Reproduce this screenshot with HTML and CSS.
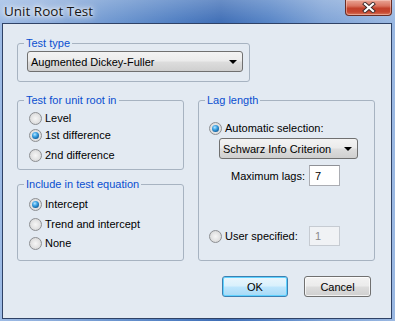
FILE: index.html
```html
<!DOCTYPE html>
<html>
<head>
<meta charset="utf-8">
<title>Unit Root Test</title>
<link rel="stylesheet" href="styles.css">
</head>
<body>
<div class="window">
  <div class="titlebar">
    <span class="title">Unit Root Test</span>
    <span class="close">
      <svg width="14" height="11" viewBox="0 0 14 11">
        <path d="M3 2 L11 9 M11 2 L3 9" stroke="#3b2a2a" stroke-width="4" stroke-linecap="square" fill="none"/>
        <path d="M3 2 L11 9 M11 2 L3 9" stroke="#ffffff" stroke-width="2.2" stroke-linecap="square" fill="none"/>
      </svg>
    </span>
  </div>
  <div class="client">
    <fieldset class="group type-group">
      <legend>Test type</legend>
      <div class="body type-body">
        <div class="combo type-combo"><span>Augmented Dickey-Fuller</span><i class="arrow"></i></div>
      </div>
    </fieldset>
    <div class="columns">
      <div class="col">
        <fieldset class="group unit-group">
          <legend>Test for unit root in</legend>
          <div class="body unit-body">
            <label class="radio"><span class="dot"></span>Level</label>
            <label class="radio gap1"><span class="dot on"></span>1st difference</label>
            <label class="radio gap4"><span class="dot"></span>2nd difference</label>
          </div>
        </fieldset>
        <fieldset class="group include-group">
          <legend>Include in test equation</legend>
          <div class="body include-body">
            <label class="radio"><span class="dot on"></span>Intercept</label>
            <label class="radio gap4"><span class="dot"></span>Trend and intercept</label>
            <label class="radio gap3"><span class="dot"></span>None</label>
          </div>
        </fieldset>
      </div>
      <fieldset class="group lag-group">
        <legend>Lag length</legend>
        <div class="body lag-body">
          <label class="radio"><span class="dot on"></span>Automatic selection:</label>
          <div class="combo lag-combo"><span>Schwarz Info Criterion</span><i class="arrow"></i></div>
          <div class="maxrow"><span class="maxlabel">Maximum lags:</span><span class="field">7</span></div>
          <div class="userrow">
            <label class="radio userlabel"><span class="dot"></span>User specified:</label>
            <span class="field disabled">1</span>
          </div>
        </div>
      </fieldset>
    </div>
    <div class="buttons">
      <button class="btn default">OK</button>
      <button class="btn">Cancel</button>
    </div>
  </div>
</div>
</body>
</html>
```
FILE: styles.css
```css
* { box-sizing: border-box; }
html, body { margin: 0; padding: 0; }
body {
  font-family: "Liberation Sans", Arial, sans-serif;
  font-size: 11px;
  color: #000;
  background: #ffffff;
}
.window {
  width: 395px;
  height: 321px;
  overflow: hidden;
  background:
    linear-gradient(180deg, rgba(255,255,255,0.22) 0px, rgba(255,255,255,0) 23px),
    linear-gradient(90deg, #9dbbe5 0%, #8eaedc 12%, #6e97d0 28%, #4f7ec2 45%, #3f6eb6 56%, #5684c6 68%, #7fa3d6 82%, #9ab8e2 100%);
}
.titlebar {
  height: 23px;
  display: flex;
  justify-content: space-between;
  align-items: flex-start;
  padding: 0 2px 0 4px;
}
.title {
  font-family: "Open Sans", "Noto Sans", sans-serif;
  font-size: 13.5px;
  line-height: 18px;
  padding-top: 2px;
  color: #161616;
  text-shadow: 0 0 6px #fff, 0 0 10px #fff, 0 0 3px rgba(255,255,255,0.9);
}
.close {
  width: 47px;
  height: 16px;
  margin-right: 1px;
  border: 1px solid #6a2d24;
  border-top: none;
  border-radius: 0 0 4px 4px;
  background: linear-gradient(180deg, #e9a696 0%, #d9735f 40%, #c2412b 55%, #c6462f 80%, #d87a5f 100%);
  box-shadow: inset 0 0 0 1px rgba(255,220,210,0.45);
  display: flex;
  align-items: center;
  justify-content: center;
}
.client {
  margin-left: 2px;
  width: 390px;
  height: 296px;
  border: 1px solid #2f4266;
  background: #e3eaf2;
  padding: 12px 16px 0 14px;
}
.group {
  margin: 0;
  padding: 0;
  border: 1px solid #a7b3c1;
  border-radius: 3px;
  min-width: 0;
}
.group legend {
  padding: 0 2px;
  margin-left: 6px;
  color: #0a4fd0;
  line-height: 14px;
  font-size: 11px;
}
.type-group { width: 233px; }
.type-body { padding: 1px 6px 9px 9px; }
.combo {
  display: flex;
  align-items: center;
  justify-content: space-between;
  height: 21px;
  border: 1px solid #707070;
  border-radius: 3px;
  background: linear-gradient(180deg, #f3f3f3 0%, #ebebeb 48%, #dddddd 52%, #cfcfcf 100%);
  padding: 0 5px 0 3px;
}
.type-combo { width: 216px; }
.arrow {
  width: 0;
  height: 0;
  border-left: 4px solid transparent;
  border-right: 4px solid transparent;
  border-top: 4px solid #000;
}
.columns {
  margin-top: 11px;
  display: grid;
  grid-template-columns: 167px 177px;
  column-gap: 14px;
}
.col { display: flex; flex-direction: column; }
.include-group { margin-top: 7px; }
.radio {
  display: flex;
  align-items: center;
  height: 16px;
  gap: 3px;
  white-space: nowrap;
}
.gap1 { margin-top: 1px; }
.gap3 { margin-top: 3px; }
.gap4 { margin-top: 4px; }
.dot {
  position: relative;
  width: 13px;
  height: 13px;
  border-radius: 50%;
  border: 1px solid #8d8f92;
  background: radial-gradient(circle at 50% 50%, #f6f6f6 0%, #e6e6e6 45%, #cfd0d1 100%);
  flex: none;
}
.dot.on::after {
  content: "";
  position: absolute;
  left: 2px;
  top: 2px;
  width: 7px;
  height: 7px;
  border-radius: 50%;
  background: radial-gradient(circle at 40% 35%, #b8e6ff 0%, #41a6e6 35%, #0f5f9e 75%, #0a3a66 100%);
}
.unit-body { padding: 3px 0 6px 11px; }
.include-body { padding: 5px 0 9px 11px; }
.lag-body { padding: 13px 0 0 10px; }
.lag-combo { width: 139px; margin: 2px 0 0 10px; }
.maxrow {
  display: flex;
  align-items: center;
  height: 21px;
  margin-top: 6px;
  padding-left: 22px;
}
.maxlabel {
  width: 68px;
  white-space: nowrap;
}
.field {
  display: flex;
  align-items: center;
  width: 31px;
  height: 21px;
  margin-left: 10px;
  padding-left: 5px;
  background: #fff;
  border: 1px solid #abadb3;
  border-top-color: #8e9096;
}
.userrow {
  display: flex;
  align-items: center;
  height: 20px;
  margin-top: 40px;
}
.userlabel { width: 100px; }
.userrow .field { height: 20px; margin-left: 0; }
.field.disabled {
  background: #f0f2f5;
  border-color: #c6cbd2;
  color: #8a8a8a;
}
.buttons {
  display: flex;
  justify-content: flex-end;
  gap: 16px;
  margin-top: 15px;
  margin-right: 4px;
}
.btn {
  font-family: "Liberation Sans", Arial, sans-serif;
  font-size: 11px;
  color: #000;
  width: 67px;
  height: 21px;
  padding: 0;
  border: 1px solid #707070;
  border-radius: 3px;
  background: linear-gradient(180deg, #f3f3f3 0%, #ebebeb 48%, #dddddd 52%, #cfcfcf 100%);
  box-shadow: inset 0 0 0 1px rgba(255,255,255,0.7);
}
.btn.default {
  width: 66px;
  border-color: #3c7fb1;
  background: linear-gradient(180deg, #eaf6fd 0%, #d9f0fc 48%, #bee6fd 52%, #a7d9f5 100%);
  box-shadow: inset 0 0 0 1px #5fd2ff;
}
```
